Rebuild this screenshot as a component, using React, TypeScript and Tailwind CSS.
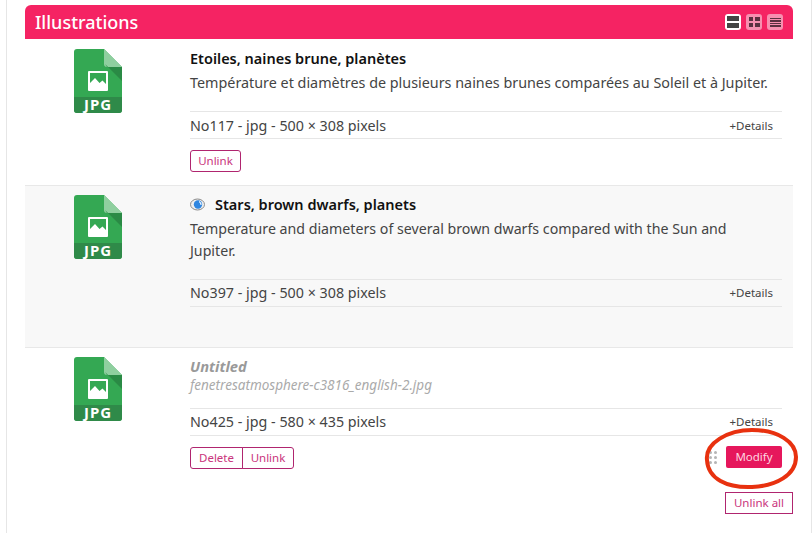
const font = { fontFamily: '"Noto Sans", "Open Sans", sans-serif' };

function JpgIcon() {
  return (
    <svg width="48" height="64" viewBox="0 0 48 64" className="block overflow-visible">
      <path d="M3 0H30L48 18V61a3 3 0 0 1-3 3H3a3 3 0 0 1-3-3V3a3 3 0 0 1 3-3Z" fill="#34a853" />
      <path d="M30 0L48 18H33a3 3 0 0 1-3-3Z" fill="#8fcf9f" />
      <path d="M31 15 L48 32V18H33Z" fill="#2a8a45" />
      <path d="M0 48H48V61a3 3 0 0 1-3 3H3a3 3 0 0 1-3-3Z" fill="#2f8a49" />
      <rect x="14" y="22" width="20" height="20" rx="1" fill="#fff" />
      <path d="M16 24H32V35L28.5 31.5L25.5 34L21 29L16 34Z" fill="#34a853" />
      <text x="24" y="61" textAnchor="middle" fontFamily="'Noto Sans', sans-serif" fontWeight="700" fontSize="15" letterSpacing="1" fill="#fff">JPG</text>
    </svg>
  );
}

function Rule({ children, lower = false }: { children: string; lower?: boolean }) {
  return (
    <div className={"flex h-[28px] items-center justify-between border-y border-[#e6e6e6] text-[14.3px] text-[#444] " + (lower ? "pt-[1px]" : "")}>
      <span>{children}</span>
      <span className="pr-[9px] text-[11.5px] text-[#444]">+Details</span>
    </div>
  );
}

function OutlineBtn({ children, className = "" }: { children: string; className?: string }) {
  return (
    <button className={"flex h-[22px] items-center justify-center border border-[#b0256f] text-[11.5px] text-[#c9347c] " + className}>
      {children}
    </button>
  );
}

function ViewIcons() {
  return (
    <div className="flex items-center gap-[5px]">
      <span className="flex h-[16px] w-[16px] flex-col justify-center gap-[1.5px] rounded-[3px] bg-white px-[2px]">
        <span className="h-[5px] bg-[#444]" />
        <span className="h-[5px] bg-[#444]" />
      </span>
      <span className="grid h-[16px] w-[16px] grid-cols-2 content-center gap-[2px] rounded-[3px] bg-[#f78fb0] px-[2.5px]">
        <span className="h-[4px] bg-[#5b3040]" />
        <span className="h-[4px] bg-[#5b3040]" />
        <span className="h-[4px] bg-[#5b3040]" />
        <span className="h-[4px] bg-[#5b3040]" />
      </span>
      <span className="flex h-[16px] w-[16px] flex-col justify-center gap-[1px] rounded-[3px] bg-[#f78fb0] px-[2.5px]">
        <span className="h-[1.5px] bg-[#5b3040]" />
        <span className="h-[1.5px] bg-[#5b3040]" />
        <span className="h-[1.5px] bg-[#5b3040]" />
        <span className="h-[1.5px] bg-[#5b3040]" />
      </span>
    </div>
  );
}

function Eye() {
  return (
    <svg width="15" height="13" viewBox="0 0 15 13">
      <ellipse cx="7.5" cy="6.5" rx="7" ry="5.5" fill="#efefef" stroke="#8a8a8a" />
      <circle cx="8" cy="6.5" r="4.2" fill="#2f86e0" />
      <path d="M9 3.6a3 3 0 0 1 2 3.2a3.2 3.2 0 0 0-2-3.2Z" fill="#fff" stroke="#fff" strokeWidth="0.8" />
    </svg>
  );
}

export default function App() {
  return (
    <div style={font} className="relative h-[533px] w-[812px] overflow-hidden bg-white">
      <div className="ml-[6px] h-full border-x border-[#e6e6e6] pl-[18px] pr-[18px] pt-[5px]">
        <div className="flex h-[34px] items-center justify-between rounded-t-[6px] bg-[#f52363] pl-[10px] pr-[10px]">
          <span className="pb-[1px] text-[18px] font-medium leading-none text-white">Illustrations</span>
          <ViewIcons />
        </div>

        <div className="flex h-[147px] border-b border-[#e8e8e8]">
          <div className="w-[165px] shrink-0 pl-[49px] pt-[10px]"><JpgIcon /></div>
          <div className="flex-1 pr-[11px] pt-[9px]">
            <div className="text-[14.5px] font-semibold leading-[20px] text-[#111]">Etoiles, naines brune, planètes</div>
            <p className="mt-[4px] h-[39px] text-[14.35px] leading-[22px] text-[#444]">Température et diamètres de plusieurs naines brunes comparées au Soleil et à Jupiter.</p>
            <Rule lower>No117 - jpg - 500 × 308 pixels</Rule>
            <OutlineBtn className="mt-[11px] w-[51px] rounded-[3px]">Unlink</OutlineBtn>
          </div>
        </div>

        <div className="flex h-[162px] border-b border-[#e8e8e8] bg-[#f8f8f8]">
          <div className="w-[165px] shrink-0 pl-[49px] pt-[9px]"><JpgIcon /></div>
          <div className="flex-1 pr-[11px] pt-[8px]">
            <div className="flex items-center gap-[10px] text-[14.5px] font-semibold leading-[20px] text-[#111]"><Eye />Stars, brown dwarfs, planets</div>
            <p className="mt-[4px] h-[61px] max-w-[560px] text-[14.2px] leading-[22px] text-[#444]">Temperature and diameters of several brown dwarfs compared with the Sun and Jupiter.</p>
            <Rule>No397 - jpg - 500 × 308 pixels</Rule>
          </div>
        </div>

        <div className="flex">
          <div className="w-[165px] shrink-0 pl-[49px] pt-[9px]"><JpgIcon /></div>
          <div className="flex-1 pr-[11px] pt-[8px]">
            <div className="text-[14.7px] font-bold italic leading-[20px] text-[#999]">Untitled</div>
            <div className="text-[13.5px] italic leading-[19px] text-[#aaa]">fenetresatmosphere-c3816_english-2.jpg</div>
            <div className="mt-[13px]"><Rule>No425 - jpg - 580 × 435 pixels</Rule></div>
            <div className="mt-[10px] flex items-start justify-between">
              <div className="mt-[1px] flex">
                <OutlineBtn className="w-[53px] rounded-l-[3px]">Delete</OutlineBtn>
                <OutlineBtn className="-ml-px w-[52px] rounded-r-[3px]">Unlink</OutlineBtn>
              </div>
              <div className="flex items-center gap-[9px]">
                <span className="grid grid-cols-2 gap-[2px]">
                  {[0, 1, 2, 3, 4, 5].map((i) => <span key={i} className="h-[3px] w-[3px] rounded-full bg-[#b5b5b5]" />)}
                </span>
                <button className="flex h-[22px] w-[56px] items-center justify-center rounded-[2px] bg-[#e6175c] text-[11.5px] text-[#ffd5e0]">Modify</button>
              </div>
            </div>
            <div className="mr-[-11px] mt-[24px] flex justify-end">
              <button className="-mt-px flex h-[22px] w-[68px] items-center justify-center border border-[#b0256f] text-[11.5px] text-[#c9347c]">Unlink all</button>
            </div>
          </div>
        </div>
      </div>

      <svg className="pointer-events-none absolute left-[700px] top-[425px]" width="104" height="72" viewBox="0 0 104 72">
        <path d="M7 35C5 18 28 5 52 5C78 5 96 17 96 32C96 50 76 61 52 62C27 63 8 54 7 35Z" fill="none" stroke="#e8310f" strokeWidth="4" />
      </svg>
    </div>
  );
}
